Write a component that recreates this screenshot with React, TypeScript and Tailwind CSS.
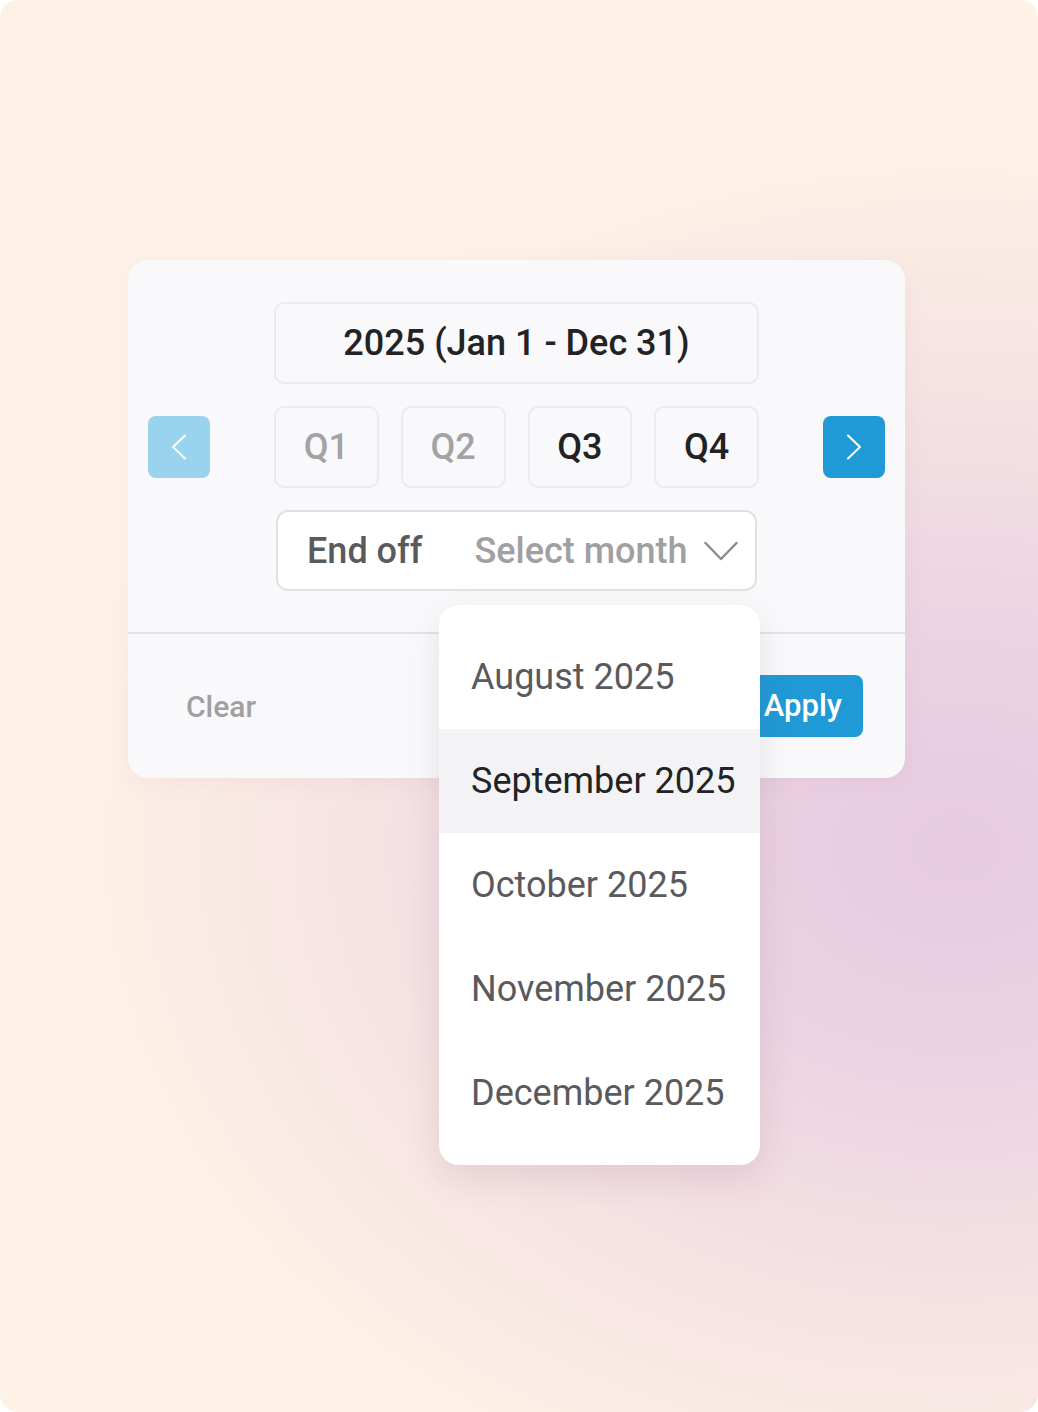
const quarters = [
  { label: "Q1", enabled: false },
  { label: "Q2", enabled: false },
  { label: "Q3", enabled: true },
  { label: "Q4", enabled: true },
];

const months = ["August 2025", "September 2025", "October 2025", "November 2025", "December 2025"];

function NavArrow({ dir }: { dir: "left" | "right" }) {
  return (
    <svg width="16" height="26" viewBox="0 0 16 26" fill="none" stroke="currentColor" strokeWidth="2" strokeLinecap="round" strokeLinejoin="round">
      {dir === "left" ? <polyline points="14,1.5 2,13 14,24.5" /> : <polyline points="2,1.5 14,13 2,24.5" />}
    </svg>
  );
}

export default function App() {
  const selected = "September 2025";

  return (
    <div className="h-[1412px] w-[1038px] bg-white font-['Roboto',sans-serif]">
      <div className="h-full w-full overflow-hidden rounded-[18px] bg-[radial-gradient(ellipse_980px_780px_at_92%_60%,#e7cae0_0%,#ecd3e2_28%,#f5e2e3_58%,#fef2e6_92%)] pt-[260px]">
        <div className="relative ml-[128px] w-[777px] rounded-[20px] bg-[#f9f9fb] shadow-[0_4px_24px_rgba(120,80,100,0.06)]">
          <div className="flex items-center justify-between px-5 pb-[41px] pt-[42px]">
            <button
              type="button"
              className="flex h-[62px] w-[62px] items-center justify-center rounded-[8px] bg-[#9ad3ee] text-white"
            >
              <NavArrow dir="left" />
            </button>

            <div className="flex w-[485px] flex-col gap-[22px]">
              <div className="flex h-[82px] items-center justify-center rounded-[10px] border-2 border-[#ececee] text-[36px] font-medium text-[#232325]">
                2025 (Jan 1 - Dec 31)
              </div>
              <div className="flex gap-[22px]">
                {quarters.map((q) => (
                  <div
                    key={q.label}
                    className={`flex h-[82px] flex-1 items-center justify-center rounded-[10px] border-2 border-[#ececee] text-[36px] font-medium ${
                      q.enabled ? "text-[#222224]" : "text-[#a3a3a5]"
                    }`}
                  >
                    {q.label}
                  </div>
                ))}
              </div>
              <div className="mx-[2px] flex h-[81px] items-center rounded-[12px] border-2 border-[#e1e1e3] bg-white pl-[29px] pr-[17px] text-[36px]">
                <span className="font-medium text-[#5a5a5c]">End off</span>
                <span className="ml-[52px] font-medium text-[#a0a0a2]">Select month</span>
                <svg className="ml-auto text-[#8c8c8e]" width="34" height="20" viewBox="0 0 34 20" fill="none" stroke="currentColor" strokeWidth="2.5" strokeLinecap="round" strokeLinejoin="round">
                  <polyline points="1.5,2 17,18 32.5,2" />
                </svg>
              </div>
            </div>

            <button
              type="button"
              className="flex h-[62px] w-[62px] items-center justify-center rounded-[8px] bg-[#1f9ad6] text-white"
            >
              <NavArrow dir="right" />
            </button>
          </div>

          <div className="h-[2px] bg-[#e3e3e5]" />

          <div className="flex h-[144px] items-center justify-between pl-[58px] pr-[42px]">
            <button type="button" className="text-[30px] font-medium text-[#a0a0a2]">
              Clear
            </button>
            <button
              type="button"
              className="flex h-[62px] items-center rounded-[8px] bg-[#1f9ad6] px-[21px] text-[31px] font-medium text-white"
            >
              Apply
            </button>
          </div>

          <div className="absolute left-[311px] top-[345px] w-[321px] rounded-[20px] bg-white py-[20px] shadow-[0_12px_36px_rgba(110,70,90,0.14)]">
            {months.map((m) => (
              <div
                key={m}
                className={`flex h-[104px] items-center pl-[32px] text-[36px] ${
                  m === selected ? "bg-[#f3f3f5] text-[#232325]" : "text-[#5a5a5c]"
                }`}
              >
                {m}
              </div>
            ))}
          </div>
        </div>
      </div>
    </div>
  );
}
